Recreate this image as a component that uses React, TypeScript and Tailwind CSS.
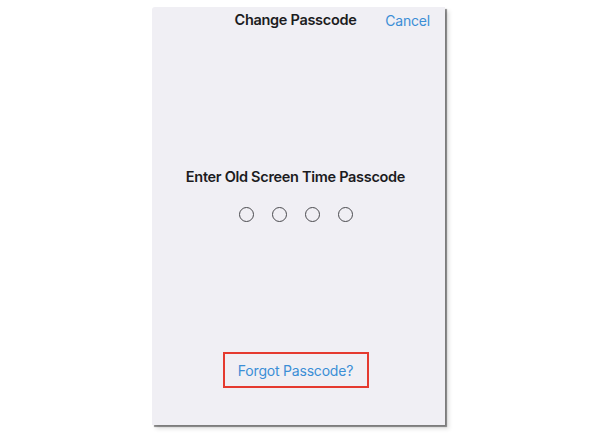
export default function App() {
  return (
    <div className="w-[600px] h-[434px] bg-white pt-[7px] pl-[152px]" style={{ fontFamily: 'Inter, "Noto Sans", sans-serif' }}>
      <div className="w-[293px] h-[418px] bg-[#f0eff4] rounded-tl-[3px] shadow-[2px_2px_1px_rgba(0,0,0,0.45),4px_4px_4px_rgba(0,0,0,0.12)] flex flex-col items-center pr-[6px]">
        <div className="relative w-full mt-[1px] h-[24px] flex items-center justify-center">
          <span className="text-[14.5px] font-semibold text-[#1c1c1e] tracking-[-0.3px]">Change Passcode</span>
          <span className="absolute right-[9px] text-[14px] text-[#3b8ed6] tracking-[-0.2px]">Cancel</span>
        </div>
        <div className="mt-[135px] h-[20px] flex items-center text-[14.5px] font-semibold text-[#1c1c1e] tracking-[-0.3px]">
          Enter Old Screen Time Passcode
        </div>
        <div className="mt-[20px] flex gap-[18px]">
          {[0, 1, 2, 3].map((i) => (
            <div key={i} className="w-[15px] h-[15px] rounded-full border-[1.4px] border-[#4a4a4e]" />
          ))}
        </div>
        <div className="mt-[130px] w-[146px] h-[36px] border-2 border-[#e53a2f] flex items-center justify-center">
          <span className="text-[14px] text-[#3b8ed6] tracking-[-0.2px]">Forgot Passcode?</span>
        </div>
      </div>
    </div>
  );
}
